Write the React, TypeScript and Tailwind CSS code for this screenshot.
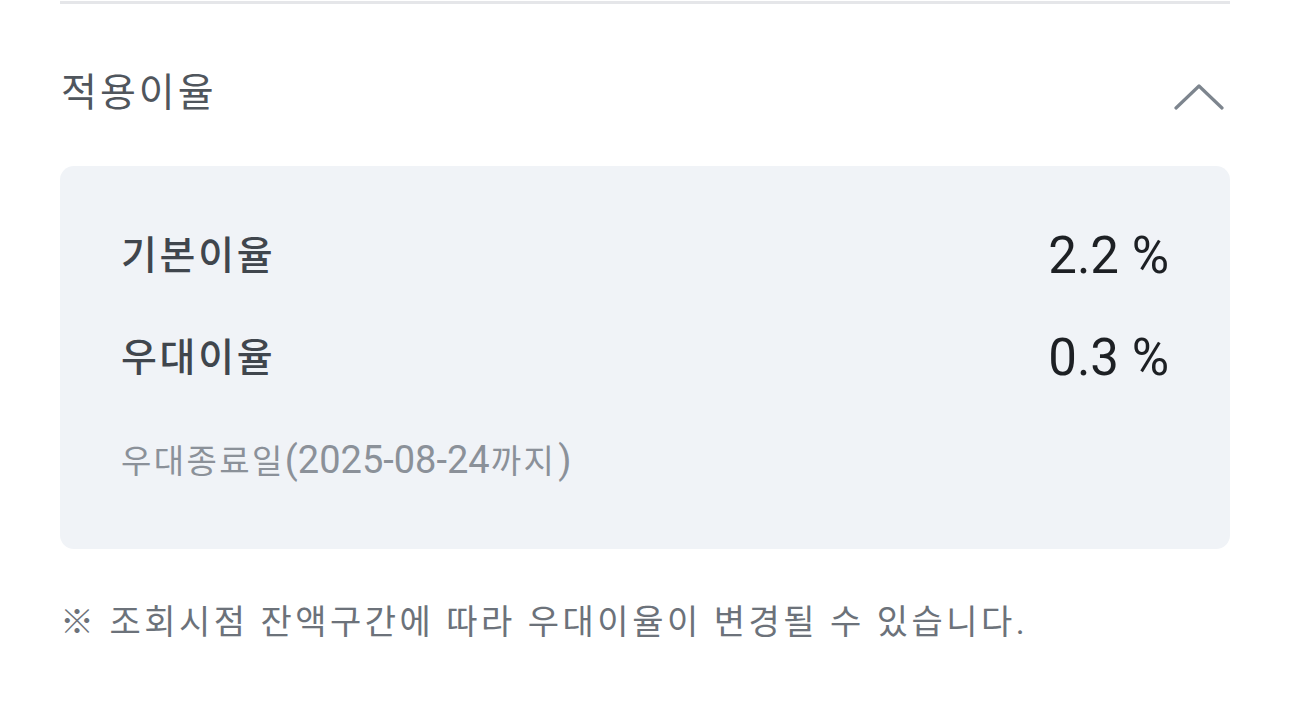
const font = { fontFamily: 'Roboto, "Noto Sans CJK KR", sans-serif' };

const rates = [
  { label: "기본이율", value: "2.2 %" },
  { label: "우대이율", value: "0.3 %" },
];

const App = () => {
  return (
    <div className="w-[1290px] h-[702px] bg-white overflow-hidden" style={font}>
      <div className="mx-[60px]">
        <div className="mt-[1px] h-[3px] bg-[#e5e6e9]" />

        <div className="flex items-center justify-between pt-[66px] pb-[50px]">
          <h2 className="text-[39px] leading-[46px] tracking-[3px] text-[#50565d] pl-[1px]">적용이율</h2>
          <svg width="50" height="30" viewBox="0 0 50 30" className="mr-[6px] mt-[8px]">
            <polyline
              points="2,26 25,4 48,26"
              fill="none"
              stroke="#7d858e"
              strokeWidth="3.2"
              strokeLinecap="round"
              strokeLinejoin="round"
            />
          </svg>
        </div>

        <div className="h-[383px] rounded-[14px] bg-[#f0f3f7] px-[61px] pt-[60px]">
          <div className="flex flex-col gap-[42px]">
            {rates.map((r) => (
              <div key={r.label} className="flex h-[60px] items-center justify-between">
                <span className="text-[39px] font-medium tracking-[2.7px] text-[#40464d]">{r.label}</span>
                <span className="text-[51px] text-[#1d2024]">{r.value}</span>
              </div>
            ))}
          </div>
          <p className="mt-[44px] h-[50px] flex items-baseline text-[33px] text-[#8b9199]">
            <span className="tracking-[2.4px]">우대종료일</span>
            <span className="text-[38px]">(2025-08-24</span>
            <span className="tracking-[2.4px] ml-[1px]">까지</span>
            <span className="text-[38px] ml-[2px]">)</span>
          </p>
        </div>

        <p className="mt-[48px] h-[50px] flex items-center text-[34px] tracking-[3.5px] text-[#6c727a]">
          ※ 조회시점 잔액구간에 따라 우대이율이 변경될 수 있습니다.
        </p>
      </div>
    </div>
  );
};

export default App;
